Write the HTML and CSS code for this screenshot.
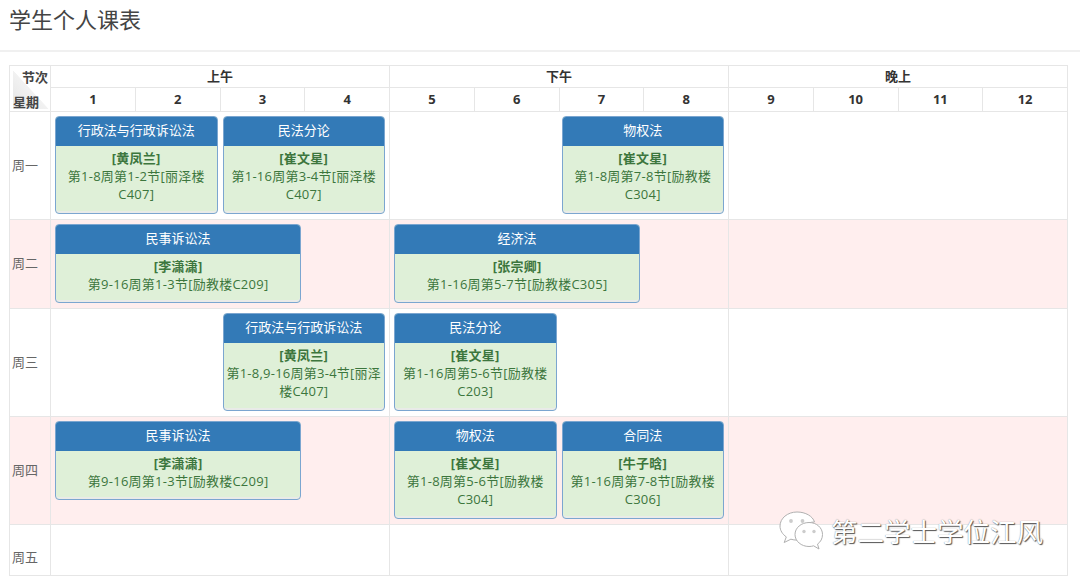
FILE: index.html
```html
<!DOCTYPE html>
<html lang="zh-CN">
<head>
<meta charset="utf-8">
<title>学生个人课表</title>
<link rel="stylesheet" href="styles.css">
</head>
<body>
<header class="page-title"><h1>学生个人课表</h1></header>
<main class="content">
<table class="schedule">
  <colgroup>
    <col class="col-day">
    <col><col><col><col><col><col><col><col><col><col><col><col>
  </colgroup>
  <thead>
    <tr class="head-session">
      <th rowspan="2" class="corner"><span class="corner-top">节次</span><span class="corner-bottom">星期</span></th>
      <th colspan="4">上午</th>
      <th colspan="4">下午</th>
      <th colspan="4">晚上</th>
    </tr>
    <tr class="head-period">
      <th>1</th><th>2</th><th>3</th><th>4</th><th>5</th><th>6</th><th>7</th><th>8</th><th>9</th><th>10</th><th>11</th><th>12</th>
    </tr>
  </thead>
  <tbody>
    <tr>
      <td class="day">周一</td>
      <td colspan="4" class="session"><div class="slots">
        <article class="course s2 wrapped"><h2>行政法与行政诉讼法</h2><div class="info"><b>[黄凤兰]</b><br>第1-8周第1-2节[丽泽楼C407]</div></article>
        <article class="course s2 wrapped"><h2>民法分论</h2><div class="info"><b>[崔文星]</b><br>第1-16周第3-4节[丽泽楼C407]</div></article>
      </div></td>
      <td colspan="4" class="session"><div class="slots">
        <div class="gap s2"></div>
        <article class="course s2 wrapped"><h2>物权法</h2><div class="info"><b>[崔文星]</b><br>第1-8周第7-8节[励教楼C304]</div></article>
      </div></td>
      <td colspan="4" class="session"></td>
    </tr>
    <tr class="alt">
      <td class="day">周二</td>
      <td colspan="4" class="session"><div class="slots">
        <article class="course s3"><h2>民事诉讼法</h2><div class="info"><b>[李潇潇]</b><br>第9-16周第1-3节[励教楼C209]</div></article>
      </div></td>
      <td colspan="4" class="session"><div class="slots">
        <article class="course s3"><h2>经济法</h2><div class="info"><b>[张宗卿]</b><br>第1-16周第5-7节[励教楼C305]</div></article>
      </div></td>
      <td colspan="4" class="session"></td>
    </tr>
    <tr>
      <td class="day">周三</td>
      <td colspan="4" class="session"><div class="slots">
        <div class="gap s2"></div>
        <article class="course s2 wrapped"><h2>行政法与行政诉讼法</h2><div class="info"><b>[黄凤兰]</b><br>第1-8,9-16周第3-4节[丽泽楼C407]</div></article>
      </div></td>
      <td colspan="4" class="session"><div class="slots">
        <article class="course s2 wrapped"><h2>民法分论</h2><div class="info"><b>[崔文星]</b><br>第1-16周第5-6节[励教楼C203]</div></article>
      </div></td>
      <td colspan="4" class="session"></td>
    </tr>
    <tr class="alt">
      <td class="day">周四</td>
      <td colspan="4" class="session"><div class="slots">
        <article class="course s3"><h2>民事诉讼法</h2><div class="info"><b>[李潇潇]</b><br>第9-16周第1-3节[励教楼C209]</div></article>
      </div></td>
      <td colspan="4" class="session"><div class="slots">
        <article class="course s2 wrapped"><h2>物权法</h2><div class="info"><b>[崔文星]</b><br>第1-8周第5-6节[励教楼C304]</div></article>
        <article class="course s2 wrapped"><h2>合同法</h2><div class="info"><b>[牛子晗]</b><br>第1-16周第7-8节[励教楼C306]</div></article>
      </div></td>
      <td colspan="4" class="session"></td>
    </tr>
    <tr class="row-empty">
      <td class="day">周五</td>
      <td colspan="4" class="session"></td>
      <td colspan="4" class="session"></td>
      <td colspan="4" class="session"></td>
    </tr>
  </tbody>
</table>
</main>
<div class="watermark">
  <svg class="wx-icon" width="44" height="40" viewBox="0 0 44 40" aria-hidden="true">
    <path class="wx-bubble" d="M18 1C8.6 1 1 7.300 1 15c0 4.400 2.500 8.300 6.300 10.900L5.200 31.500l6.700-3.300c1.900.6 4 .9 6.100.9 1.200 0 2.300-.1 3.400-.3C20.800 27.300 20.500 25.700 20.500 24c0-7.400 7-13 15-13-1.700-5.800-9-10-17.500-10z"/>
    <path class="wx-bubble" d="M30 11.500c-7.700 0-14 5.300-14 12s6.300 12 14 12c1.600 0 3.200-.2 4.600-.7l5.400 3.200-1.500-4.900c3.200-2.200 5-5.600 5-9.600 0-6.700-5.800-12-13.500-12z"/>
    <circle class="wx-eye" cx="12" cy="10" r="1.900"/><circle class="wx-eye" cx="23.500" cy="10" r="1.900"/>
    <circle class="wx-eye" cx="25" cy="20.500" r="1.700"/><circle class="wx-eye" cx="35" cy="20.500" r="1.700"/>
  </svg>
  <span class="wx-name">第二学士学位江风</span>
</div>
</body>
</html>
```
FILE: styles.css
```css
* { box-sizing: border-box; }
html, body { height: 100%; }
body {
  margin: 0;
  background: #fff;
  color: #555;
  font-family: "Open Sans", "Noto Sans CJK SC", sans-serif;
  font-size: 13px;
  overflow: hidden;
  position: relative;
}
.page-title {
  height: 52px;
  padding: 3px 9px 0;
  border-bottom: 2px solid #f0f0f0;
}
.page-title h1 {
  margin: 0;
  font-size: 22px;
  line-height: 32px;
  font-weight: 400;
  color: #444;
}
.content { padding: 13px 12px 0 9px; }
.schedule {
  width: 1059px;
  table-layout: fixed;
  border-collapse: collapse;
}
.col-day { width: 41px; }
.schedule th, .schedule td { border: 1px solid #e6e6e6; padding: 0; }
.schedule th { font-weight: 700; text-align: center; color: #333; }
.head-session th { height: 22px; line-height: 18px; padding-bottom: 2px; }
.head-period th { height: 24px; line-height: 20px; padding-bottom: 2px; }
.schedule .corner {
  position: relative;
  padding: 0;
  font-weight: 700;
  background: linear-gradient(to top right, #e4e4e4 0, #f2f2f2 49%, transparent 50%) no-repeat 3px 4px / 36px 39px;
}
.corner-top, .corner-bottom { position: absolute; line-height: 16px; color: #444; }
.corner-top { top: 3px; right: 2px; }
.corner-bottom { bottom: 1px; left: 3px; }
.schedule .day { padding: 0 0 3px 2px; color: #666; vertical-align: middle; }
.alt td { background: #ffeeee; }
.session { vertical-align: top; }
.row-empty td { height: 51px; }
.schedule .row-empty .day { padding: 12px 0 0 2px; }
.slots {
  display: grid;
  grid-template-columns: repeat(4, 1fr);
  gap: 5px;
  padding: 4px 4px 5px;
  align-items: start;
}
.s2 { grid-column: span 2; }
.s3 { grid-column: span 3; }
.course {
  border: 1px solid #7ba6d0;
  border-radius: 4px;
  overflow: hidden;
  background: #dff0d8;
  box-shadow: inset 0 -2px 0 #e9ebe8;
}
.course h2 {
  margin: 0;
  height: 29px;
  background: #337ab7;
  color: #fff;
  font-size: 13px;
  font-weight: 400;
  line-height: 27px;
  text-align: center;
}
.info {
  padding: 3px 1px 9px;
  color: #3c763d;
  line-height: 18px;
  letter-spacing: .25px;
  text-align: center;
}
.wrapped .info { padding-bottom: 10px; }
.info b { font-weight: 700; }
.watermark {
  position: absolute;
  left: 779px;
  top: 511px;
  display: flex;
  align-items: center;
  gap: 8px;
}
.wx-bubble { fill: #fff; stroke: #b0b0b0; stroke-width: 1; }
.wx-eye { fill: #ccc; }
.wx-name {
  font-family: "Noto Sans CJK SC", sans-serif;
  font-size: 26.500px;
  line-height: 40px;
  color: #fff;
  text-shadow: 1px 1px 1px #555, 0 0 1px #777;
}
```
